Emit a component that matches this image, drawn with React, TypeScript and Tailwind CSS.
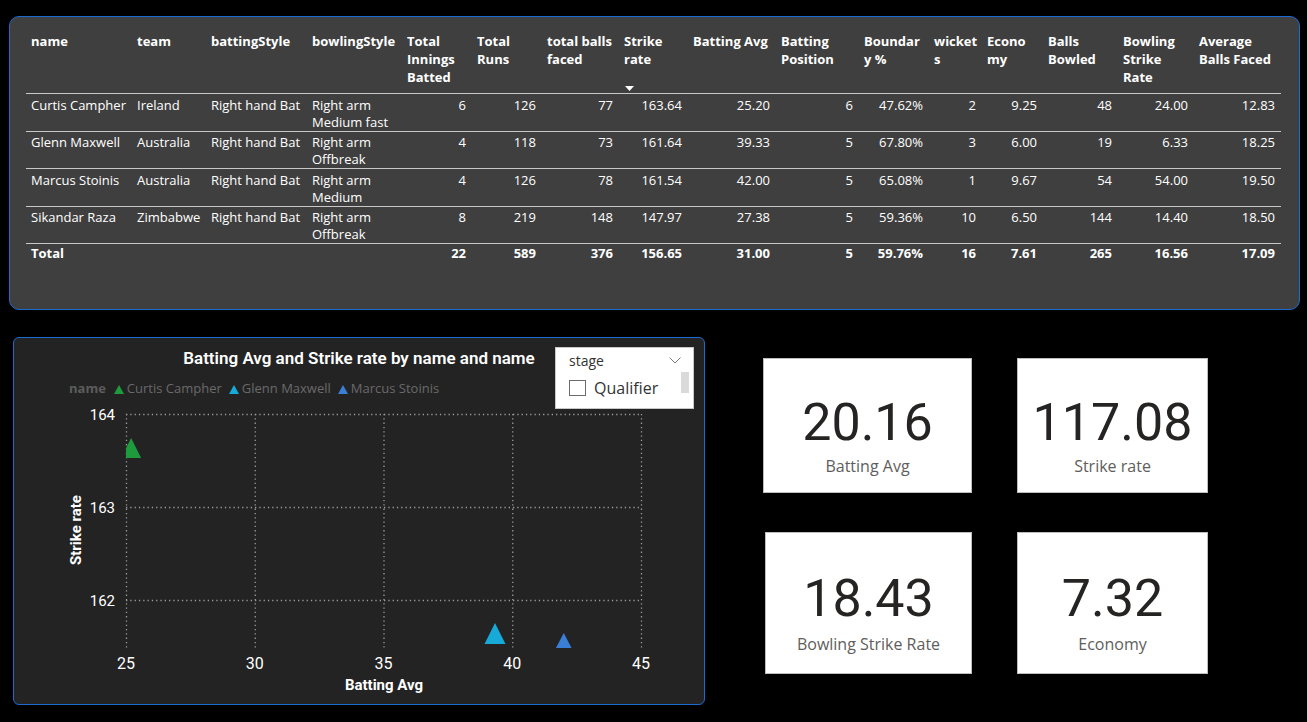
import React from 'react';

const COLS =
  'grid grid-cols-[106px_74px_101px_95px_70px_70px_77px_69px_88px_83px_70px_53px_61px_75px_76px_87px]';

const headers: string[][] = [
  ['name'],
  ['team'],
  ['battingStyle'],
  ['bowlingStyle'],
  ['Total', 'Innings', 'Batted'],
  ['Total', 'Runs'],
  ['total balls', 'faced'],
  ['Strike', 'rate'],
  ['Batting Avg'],
  ['Batting', 'Position'],
  ['Boundar', 'y %'],
  ['wicket', 's'],
  ['Econo', 'my'],
  ['Balls', 'Bowled'],
  ['Bowling', 'Strike', 'Rate'],
  ['Average', 'Balls Faced'],
];

interface Player {
  name: string;
  team: string;
  bowl: [string, string];
  nums: string[];
}

const players: Player[] = [
  {
    name: 'Curtis Campher',
    team: 'Ireland',
    bowl: ['Right arm', 'Medium fast'],
    nums: ['6', '126', '77', '163.64', '25.20', '6', '47.62%', '2', '9.25', '48', '24.00', '12.83'],
  },
  {
    name: 'Glenn Maxwell',
    team: 'Australia',
    bowl: ['Right arm', 'Offbreak'],
    nums: ['4', '118', '73', '161.64', '39.33', '5', '67.80%', '3', '6.00', '19', '6.33', '18.25'],
  },
  {
    name: 'Marcus Stoinis',
    team: 'Australia',
    bowl: ['Right arm', 'Medium'],
    nums: ['4', '126', '78', '161.54', '42.00', '5', '65.08%', '1', '9.67', '54', '54.00', '19.50'],
  },
  {
    name: 'Sikandar Raza',
    team: 'Zimbabwe',
    bowl: ['Right arm', 'Offbreak'],
    nums: ['8', '219', '148', '147.97', '27.38', '5', '59.36%', '10', '6.50', '144', '14.40', '18.50'],
  },
];

const totals = ['22', '589', '376', '156.65', '31.00', '5', '59.76%', '16', '7.61', '265', '16.56', '17.09'];

const cell = 'pl-[5px] pr-[6px] whitespace-nowrap';

const StatsTable: React.FC = () => (
  <div className="ml-[9px] mt-[16px] h-[294px] w-[1291px] rounded-[10px] border border-[#1c6bd0] bg-[#3f3f3f] pl-[16px] pt-[15px] text-[13px] text-white">
    <div className="w-[1255px]">
      <div className={`${COLS} h-[62px] border-b border-[#c8c8c8] font-bold leading-[18px]`}>
        {headers.map((lines, i) => (
          <div key={i} className={`${cell} flex flex-col`}>
            {lines.map((l) => (
              <span key={l}>{l}</span>
            ))}
            {i === 7 && (
              <svg width="9" height="5" viewBox="0 0 9 5" className="mb-[2px] ml-[1px] mt-auto">
                <path d="M0 0 H9 L4.5 5 Z" fill="#ffffff" />
              </svg>
            )}
          </div>
        ))}
      </div>

      {players.map((p) => (
        <div key={p.name} className={`${COLS} border-b border-[#c8c8c8] pt-[2.5px] leading-[17px]`}>
          <div className={cell}>{p.name}</div>
          <div className={cell}>{p.team}</div>
          <div className={cell}>Right hand Bat</div>
          <div className={cell}>
            {p.bowl[0]}
            <br />
            {p.bowl[1]}
          </div>
          {p.nums.map((n, i) => (
            <div key={i} className={`${cell} text-right`}>
              {n}
            </div>
          ))}
        </div>
      ))}

      <div className={`${COLS} pt-[1px] font-bold leading-[17px]`}>
        <div className={cell}>Total</div>
        <div />
        <div />
        <div />
        {totals.map((n, i) => (
          <div key={i} className={`${cell} text-right`}>
            {n}
          </div>
        ))}
      </div>
    </div>
  </div>
);

const GREEN = '#1e9b3d';
const CYAN = '#17a9d8';
const BLUE = '#3a7fd6';

const LegendTri: React.FC<{ color: string }> = ({ color }) => (
  <svg width="10" height="9" viewBox="0 0 10 9">
    <path d="M5 0 L10 9 H0 Z" fill={color} />
  </svg>
);

const xs = (v: number) => 112 + (v - 25) * 25.75;
const ys = (v: number) => 16 + (164 - v) * 93;

const points = [
  { x: 25.2, apex: 40, base: 60, hw: 10, color: GREEN },
  { x: 39.33, apex: 225, base: 246, hw: 10.5, color: CYAN },
  { x: 42.0, apex: 235, base: 250, hw: 7.8, color: BLUE },
];

const ScatterChart: React.FC = () => (
  <div className="relative flex h-[368px] w-[692px] flex-col rounded-[6px] border border-[#1c6bd0] bg-[#232323]">
    <div className="pt-[10px] text-center font-['Roboto',sans-serif] text-[17px] font-semibold leading-[20px] text-white">
      Batting Avg and Strike rate by name and name
    </div>

    <div className="mt-[12px] flex h-[18px] items-center pl-[55px] font-['Open_Sans',sans-serif] text-[13px] text-[#6a6a6a]">
      <span className="mr-[8px] font-bold text-[#5c5c5c]">name</span>
      <LegendTri color={GREEN} />
      <span className="ml-[3px] mr-[7px]">Curtis Campher</span>
      <LegendTri color={CYAN} />
      <span className="ml-[3px] mr-[7px]">Glenn Maxwell</span>
      <LegendTri color={BLUE} />
      <span className="ml-[3px]">Marcus Stoinis</span>
    </div>

    <svg width="690" height="306" viewBox="0 0 690 306" className="font-['Roboto',sans-serif]">
      <defs>
        <clipPath id="plot">
          <rect x="112" y="16" width="515" height="234" />
        </clipPath>
      </defs>
      {[164, 163, 162].map((v) => (
        <g key={v}>
          <line
            x1="112"
            x2="627"
            y1={ys(v) + 0.5}
            y2={ys(v) + 0.5}
            stroke="#9a9a9a"
            strokeWidth="1.3"
            strokeDasharray="1.3 3"
          />
          <text x="101" y={ys(v) + 1} fill="#ffffff" fontSize="15" textAnchor="end" dominantBaseline="central">
            {v}
          </text>
        </g>
      ))}
      {[25, 30, 35, 40, 45].map((v) => (
        <g key={v}>
          <line
            x1={xs(v) + 0.5}
            x2={xs(v) + 0.5}
            y1="16"
            y2="250"
            stroke="#9a9a9a"
            strokeWidth="1.3"
            strokeDasharray="1.3 3"
          />
          <text x={xs(v)} y="265" fill="#ffffff" fontSize="16" textAnchor="middle" dominantBaseline="central">
            {v}
          </text>
        </g>
      ))}
      <g clipPath="url(#plot)">
        {points.map((p) => {
          const cx = xs(p.x);
          return (
            <path
              key={p.x}
              d={`M${cx} ${p.apex} L${cx + p.hw} ${p.base} L${cx - p.hw} ${p.base} Z`}
              fill={p.color}
            />
          );
        })}
      </g>
      <text x="370" y="287" fill="#ffffff" fontSize="15" fontWeight="700" textAnchor="middle" dominantBaseline="central">
        Batting Avg
      </text>
      <text
        x="62"
        y="132"
        fill="#ffffff"
        fontSize="15"
        fontWeight="700"
        textAnchor="middle"
        dominantBaseline="central"
        transform="rotate(-90 62 132)"
      >
        Strike rate
      </text>
    </svg>

    <div className="absolute left-[541px] top-[9px] h-[62px] w-[139px] border border-[#c8c8c8] bg-white pl-[13px] pt-[3px] font-['Open_Sans',sans-serif] text-[#333333]">
      <div className="text-[14px] leading-[20px]">stage</div>
      <svg width="12" height="7" viewBox="0 0 12 7" className="absolute left-[113px] top-[9px]">
        <path d="M0.5 0.5 L6 6 L11.5 0.5" fill="none" stroke="#7a7a7a" strokeWidth="1" />
      </svg>
      <div className="mt-[6px] flex h-[22px] items-center gap-[8px]">
        <div className="h-[16px] w-[17px] border border-[#6b6b6b]" />
        <span className="text-[16px] leading-[22px]">Qualifier</span>
      </div>
      <div className="absolute left-[125px] top-[24px] h-[21px] w-[8px] bg-[#dadada]" />
    </div>
  </div>
);

interface CardProps {
  value: string;
  label: string;
  top: number;
  labelGap: number;
  className?: string;
}

const Card: React.FC<CardProps> = ({ value, label, top, labelGap, className }) => (
  <div className={`flex flex-col items-center border border-[#bdbdbd] bg-white ${className ?? ''}`}>
    <div style={{ height: top }} />
    <div className="font-['Roboto',sans-serif] text-[52px] leading-[64px] text-[#252423]">{value}</div>
    <div style={{ height: labelGap }} />
    <div className="font-['Open_Sans',sans-serif] text-[16px] leading-[22px] text-[#605e5c]">{label}</div>
  </div>
);

export default function App() {
  return (
    <div className="h-[722px] w-[1307px] overflow-hidden bg-black font-['Open_Sans',sans-serif]">
      <StatsTable />
      <div className="ml-[13px] mt-[27px] flex">
        <ScatterChart />
        <div className="ml-[58px] mt-[21px] grid grid-cols-[209px_191px] grid-rows-[135px_142px] gap-x-[45px] gap-y-[39px]">
          <Card value="20.16" label="Batting Avg" top={32} labelGap={0} />
          <Card value="117.08" label="Strike rate" top={32} labelGap={0} />
          <Card value="18.43" label="Bowling Strike Rate" top={34} labelGap={2} className="ml-[2px]" />
          <Card value="7.32" label="Economy" top={34} labelGap={2} />
        </div>
      </div>
    </div>
  );
}
